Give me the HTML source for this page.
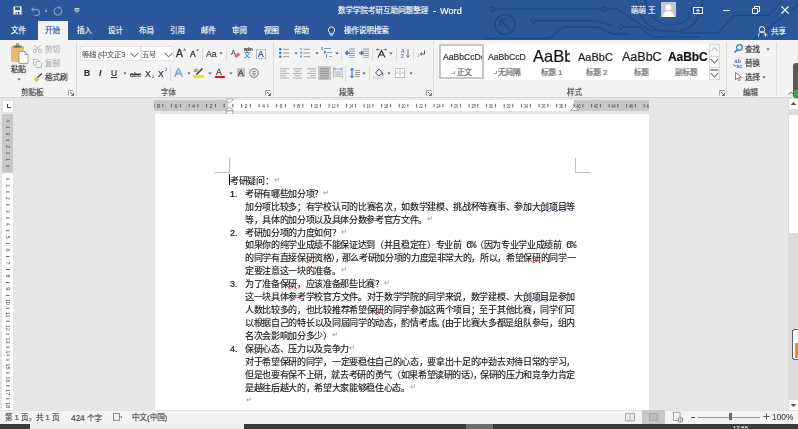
<!DOCTYPE html>
<html lang="zh-CN"><head><meta charset="utf-8"><style>
html,body{margin:0;padding:0;width:798px;height:429px;overflow:hidden;background:#fff;font-family:"Liberation Sans",sans-serif;}
.r{position:absolute;display:block;}
svg.r{will-change:transform}
.t{position:absolute;white-space:nowrap;will-change:transform;-webkit-text-stroke-width:0.2px}
.j{text-align:justify;text-align-last:justify;}
.dt{-webkit-text-stroke-width:0.12px}
.cpa{margin-right:-1.5px}
.cpb{margin-right:-1.5px}
.cp2{margin-right:-3px}
.lt{letter-spacing:-1.55px;font-family:"Liberation Mono",monospace;font-size:10px}
.sq{text-decoration:underline wavy #e0342c;text-decoration-thickness:0.6px;text-underline-offset:-1.6px;text-decoration-skip-ink:none}
.sqb{text-decoration:underline wavy #4a7bd0;text-decoration-thickness:0.6px;text-underline-offset:-1.6px;text-decoration-skip-ink:none}
.ret{color:#9a9a9a;font-size:7px;padding-left:0.5px;position:relative;top:-2px;letter-spacing:0}
</style></head><body>
<div class="r" style="left:0px;top:0px;width:798px;height:40px;background:#2b579a;"></div>
<svg class="r" style="left:460px;top:0px;" width="338" height="40" viewBox="0 0 338 40">
<g fill="none" stroke="#214a86" stroke-width="1.5" transform="translate(-460 0)">
<circle cx="492.6" cy="9" r="2.1"/><path d="M494.7 9H601"/><circle cx="603.2" cy="9" r="2.1"/><path d="M605.3 9H617L650 30.5H672Q680 33 690 33H718L734 15.5H768L783 0"/>
<circle cx="533.3" cy="20.7" r="2.1"/><path d="M535.4 20.7H596L612 26"/><circle cx="620.8" cy="26.8" r="2.1"/><path d="M622.9 27H640L652 37H700"/>
<path d="M484 38.5H550L562.7 27H598L612 34H630"/>
<circle cx="505" cy="24.4" r="10" stroke-width="1.9"/><path d="M500 19.5L510 29.5M500 19.5V26M500 19.5H506.5" stroke-width="1.8"/>
<path d="M645 0Q650 22 668 25Q690 26 693 5"/>
<path d="M636 0Q640 30 668 32Q700 33 703 0"/>
<path d="M753 40L798 5"/>
</g></svg>
<svg class="r" style="left:13px;top:6px;" width="9" height="9" viewBox="0 0 9 9"><path d="M0.5 0.5h8v8h-8z" fill="#fff"/><rect x="2" y="1.2" width="5" height="3" fill="#2b579a"/><rect x="2.5" y="6" width="4" height="2.5" fill="#2b579a"/><rect x="3.5" y="6.5" width="1.5" height="1.5" fill="#fff"/></svg>
<svg class="r" style="left:30px;top:6px;" width="11" height="10" viewBox="0 0 11 10"><path d="M2.5 3.5h4a3 3 0 0 1 0 6h-2" fill="none" stroke="#7f9ccb" stroke-width="1.2"/><path d="M0.8 3.5l3 -2.5v5z" fill="#7f9ccb"/></svg>
<div class="r" style="left:45px;top:10px;width:1.5px;height:1.5px;background:#7f9ccb;"></div>
<svg class="r" style="left:53px;top:6px;" width="10" height="10" viewBox="0 0 10 10"><path d="M7.5 2.5a3.8 3.8 0 1 1 -3 -1" fill="none" stroke="#7f9ccb" stroke-width="1.2"/><path d="M5 0l3 1.5 -2.5 2z" fill="#7f9ccb"/></svg>
<svg class="r" style="left:74px;top:8px;" width="6" height="5" viewBox="0 0 6 5"><path d="M0.5 0.6h5" stroke="#e6ecf5" stroke-width="0.9"/><path d="M0.8 2l2.2 2.5 2.2 -2.5z" fill="none" stroke="#e6ecf5" stroke-width="0.9" stroke-linejoin="round"/></svg>
<div class="t" style="left:338px;top:7.1000000000000005px;font-size:8px;line-height:8px;color:#fff;transform:scaleX(0.94);transform-origin:0 0;">数学学院考研互助问题整理</div>
<div class="r" style="left:432.5px;top:10.5px;width:3.5px;height:1px;background:#fff;"></div>
<div class="t" style="left:440px;top:6.8px;font-size:9.2px;line-height:9.2px;color:#fff;-webkit-text-stroke-width:0.15px">Word</div>
<div class="t" style="left:631px;top:7.1000000000000005px;font-size:8px;line-height:8px;color:#fff;transform:scaleX(0.94);transform-origin:0 0;">萌萌 王</div>
<div class="r" style="left:661px;top:2px;width:15px;height:15px;background:#c7c7c7;"></div>
<svg class="r" style="left:661px;top:2px;" width="15" height="15" viewBox="0 0 15 15"><circle cx="7.5" cy="5.5" r="3" fill="#fff"/><path d="M2 15 Q2 9 7.5 9 Q13 9 13 15z" fill="#fff"/></svg>
<svg class="r" style="left:693px;top:7px;" width="10" height="7" viewBox="0 0 10 7"><rect x="0.5" y="0.5" width="9" height="6" fill="none" stroke="#fff" stroke-width="1"/><path d="M5 5.5V2.5M3.3 4l1.7 -1.7 1.7 1.7" fill="none" stroke="#fff" stroke-width="1"/></svg>
<div class="r" style="left:723px;top:10px;width:7px;height:1px;background:#fff;"></div>
<svg class="r" style="left:752px;top:6px;" width="8" height="8" viewBox="0 0 8 8"><path d="M0.5 2.5h5v5h-5z M2.5 2.5v-2h5v5h-2" fill="none" stroke="#fff" stroke-width="1"/></svg>
<svg class="r" style="left:781px;top:6px;" width="8" height="8" viewBox="0 0 8 8"><path d="M0.5 0.5l7 7M7.5 0.5l-7 7" stroke="#fff" stroke-width="1.1"/></svg>
<div class="r" style="left:38px;top:21px;width:30px;height:19px;background:#f3f3f3;"></div>
<div class="t" style="left:11px;top:27.2px;font-size:8px;line-height:8px;color:#fff;transform:scaleX(0.94);transform-origin:0 0;">文件</div>
<div class="t" style="left:45px;top:27.2px;font-size:8px;line-height:8px;color:#2b579a;transform:scaleX(0.94);transform-origin:0 0;">开始</div>
<div class="t" style="left:76.5px;top:27.2px;font-size:8px;line-height:8px;color:#fff;transform:scaleX(0.94);transform-origin:0 0;">插入</div>
<div class="t" style="left:107.5px;top:27.2px;font-size:8px;line-height:8px;color:#fff;transform:scaleX(0.94);transform-origin:0 0;">设计</div>
<div class="t" style="left:139px;top:27.2px;font-size:8px;line-height:8px;color:#fff;transform:scaleX(0.94);transform-origin:0 0;">布局</div>
<div class="t" style="left:169.5px;top:27.2px;font-size:8px;line-height:8px;color:#fff;transform:scaleX(0.94);transform-origin:0 0;">引用</div>
<div class="t" style="left:201px;top:27.2px;font-size:8px;line-height:8px;color:#fff;transform:scaleX(0.94);transform-origin:0 0;">邮件</div>
<div class="t" style="left:232px;top:27.2px;font-size:8px;line-height:8px;color:#fff;transform:scaleX(0.94);transform-origin:0 0;">审阅</div>
<div class="t" style="left:263.5px;top:27.2px;font-size:8px;line-height:8px;color:#fff;transform:scaleX(0.94);transform-origin:0 0;">视图</div>
<div class="t" style="left:294px;top:27.2px;font-size:8px;line-height:8px;color:#fff;transform:scaleX(0.94);transform-origin:0 0;">帮助</div>
<svg class="r" style="left:327px;top:26px;" width="9" height="10" viewBox="0 0 9 10"><path d="M4.5 0.8a3.2 3.2 0 0 0 -1.8 5.8v1.3h3.6v-1.3a3.2 3.2 0 0 0 -1.8 -5.8z M3 9h3" fill="none" stroke="#fff" stroke-width="0.9"/></svg>
<div class="t" style="left:344px;top:27.2px;font-size:8px;line-height:8px;color:#fff;transform:scaleX(0.94);transform-origin:0 0;">操作说明搜索</div>
<svg class="r" style="left:758px;top:26px;" width="10" height="11" viewBox="0 0 10 11"><circle cx="4" cy="3.5" r="2.8" fill="none" stroke="#fff" stroke-width="1"/><path d="M0.5 10.5q0 -4.5 3.5 -4.5q2 0 3 1.2M7.5 7v3.5M5.8 8.8h3.5" fill="none" stroke="#fff" stroke-width="1"/></svg>
<div class="t" style="left:770.5px;top:28.2px;font-size:8px;line-height:8px;color:#fff;transform:scaleX(0.94);transform-origin:0 0;">共享</div>
<div class="r" style="left:0px;top:40px;width:798px;height:58px;background:#f3f3f3;"></div>
<div class="r" style="left:0px;top:97px;width:798px;height:1px;background:#d6d6d6;"></div>
<svg class="r" style="left:10px;top:43px;" width="19" height="21" viewBox="0 0 19 21"><rect x="1" y="3" width="13" height="16" rx="1" fill="#e8bd6a"/>
<rect x="3.5" y="2.5" width="8" height="2.2" fill="#6f6f6f"/><rect x="6.3" y="0.8" width="2.4" height="2" fill="none" stroke="#6f6f6f" stroke-width="0.8"/>
<path d="M9 8.5h6l3 3v9h-9z" fill="#fff" stroke="#8c8c8c" stroke-width="0.8"/><path d="M15 8.5v3h3" fill="none" stroke="#8c8c8c" stroke-width="0.8"/></svg>
<div class="t" style="left:10.5px;top:66.2px;font-size:8px;line-height:8px;color:#333;transform:scaleX(0.94);transform-origin:0 0;">粘贴</div>
<svg class="r" style="left:16.5px;top:78px;" width="4" height="3" viewBox="0 0 4 3"><path d="M0.3 0.5h3.4L2 2.5z" fill="#555"/></svg>
<svg class="r" style="left:33px;top:45px;" width="9" height="8" viewBox="0 0 9 8"><circle cx="2" cy="6" r="1.6" fill="none" stroke="#b3b3b3" stroke-width="0.9"/><circle cx="7" cy="6" r="1.6" fill="none" stroke="#b3b3b3" stroke-width="0.9"/><path d="M1 0l5.5 5M8 0l-5.5 5" stroke="#b3b3b3" stroke-width="0.9"/></svg>
<div class="t" style="left:44.5px;top:46.2px;font-size:8px;line-height:8px;color:#b0b0b0;transform:scaleX(0.94);transform-origin:0 0;">剪切</div>
<svg class="r" style="left:33px;top:59px;" width="9" height="9" viewBox="0 0 9 9"><path d="M0.5 0.5h4l1.5 1.5v4h-5.5z" fill="#f3f3f3" stroke="#b3b3b3" stroke-width="0.8"/><path d="M3 2.5h4l1.5 1.5v4.5h-5.5z" fill="#f3f3f3" stroke="#b3b3b3" stroke-width="0.8"/></svg>
<div class="t" style="left:44.5px;top:60.2px;font-size:8px;line-height:8px;color:#b0b0b0;transform:scaleX(0.94);transform-origin:0 0;">复制</div>
<svg class="r" style="left:33px;top:73px;" width="10" height="9" viewBox="0 0 10 9"><path d="M0.5 6.5l3 -3 3 3 -3 2.5z" fill="#e8bd6a"/><path d="M4.5 4.5l4.5 -4" stroke="#444" stroke-width="1.4"/></svg>
<div class="t" style="left:44.5px;top:74.2px;font-size:8px;line-height:8px;color:#333;transform:scaleX(0.94);transform-origin:0 0;">格式刷</div>
<div class="t" style="left:21px;top:88.7px;font-size:8px;line-height:8px;color:#444;transform:scaleX(0.94);transform-origin:0 0;">剪贴板</div>
<svg class="r" style="left:68px;top:90px;" width="6" height="6" viewBox="0 0 6 6"><path d="M0.5 5.5V0.5H5.5" fill="none" stroke="#8a8a8a" stroke-width="0.8"/><path d="M2 2l3.5 3.5M5.5 3v2.5H3" fill="none" stroke="#555" stroke-width="0.8"/></svg>
<div class="r" style="left:75.5px;top:42px;width:1px;height:54px;background:#dcdcdc;"></div>
<div class="r" style="left:80px;top:46px;width:61px;height:15px;background:#fff;box-sizing:border-box;border:1px solid #e3e3e3"></div>
<div class="t" style="left:81.5px;top:50.5px;font-size:7.3px;line-height:7.3px;color:#666;">等线 (中文正3</div>
<svg class="r" style="left:129.5px;top:51.5px;" width="9" height="6" viewBox="0 0 9 6"><path d="M0.5 0.8l4 4 4 -4" fill="none" stroke="#444" stroke-width="1"/></svg>
<div class="r" style="left:140.5px;top:46px;width:33px;height:15px;background:#fff;box-sizing:border-box;border:1px solid #e3e3e3"></div>
<div class="t" style="left:142px;top:50.5px;font-size:7.3px;line-height:7.3px;color:#666;">五号</div>
<svg class="r" style="left:163.5px;top:51.5px;" width="9" height="6" viewBox="0 0 9 6"><path d="M0.5 0.8l4 4 4 -4" fill="none" stroke="#444" stroke-width="1"/></svg>
<div class="t" style="left:176px;top:49.2px;font-size:10.3px;line-height:10.3px;color:#333;-webkit-text-stroke-width:0.35px">A</div>
<svg class="r" style="left:182.5px;top:48px;" width="3" height="2.5" viewBox="0 0 3 2.5"><path d="M0 2.5L1.5 0.3 3 2.5z" fill="#3a78c3"/></svg>
<div class="t" style="left:189.8px;top:50.3px;font-size:8.6px;line-height:8.6px;color:#333;-webkit-text-stroke-width:0.35px">A</div>
<svg class="r" style="left:196px;top:48.5px;" width="3" height="2.5" viewBox="0 0 3 2.5"><path d="M0 0.3L1.5 2.5 3 0.3z" fill="#3a78c3"/></svg>
<div class="r" style="left:201.5px;top:47px;width:1px;height:14px;background:#dcdcdc;"></div>
<div class="t" style="left:205.5px;top:49.5px;font-size:8.8px;line-height:8.8px;color:#444;">Aa</div>
<svg class="r" style="left:218.5px;top:52px;" width="4" height="3" viewBox="0 0 4 3"><path d="M0.3 0.5h3.4L2 2.5z" fill="#555"/></svg>
<div class="r" style="left:225.5px;top:47px;width:1px;height:14px;background:#dcdcdc;"></div>
<div class="t" style="left:231px;top:48.5px;font-size:7px;line-height:7px;color:#555;">A</div>
<svg class="r" style="left:233px;top:52px;" width="8" height="6" viewBox="0 0 8 6"><path d="M1 4l4 -3.5 2.5 2 -4 3.5z" fill="#e06b8c"/></svg>
<div class="t" style="left:243.5px;top:48px;font-size:4.5px;line-height:4.5px;color:#444;font-weight:bold">wén</div>
<div class="t" style="left:244px;top:52px;font-size:6.5px;line-height:6.5px;color:#3a78c3;">文</div>
<div class="r" style="left:256px;top:48.5px;width:10px;height:10px;background:transparent;box-sizing:border-box;border:1px solid #a9c1de;background:#fbfbfb"></div>
<div class="t" style="left:257.8px;top:50px;font-size:8.5px;line-height:8.5px;color:#333;">A</div>
<div class="t" style="left:83.5px;top:69px;font-size:8.5px;line-height:8.5px;color:#333;font-weight:bold">B</div>
<div class="t" style="left:98.5px;top:69px;font-size:8.5px;line-height:8.5px;color:#333;font-style:italic;font-weight:bold">I</div>
<div class="t" style="left:110.5px;top:68.5px;font-size:8.5px;line-height:8.5px;color:#333;">U</div>
<div class="r" style="left:110.5px;top:77px;width:6.5px;height:0.8px;background:#333;"></div>
<svg class="r" style="left:122.5px;top:72px;" width="4" height="3" viewBox="0 0 4 3"><path d="M0.3 0.5h3.4L2 2.5z" fill="#555"/></svg>
<div class="t" style="left:129.5px;top:70.5px;font-size:7px;line-height:7px;color:#444;font-family:"Liberation Serif",serif;letter-spacing:-0.3px">abe</div>
<div class="r" style="left:130px;top:73.5px;width:9.5px;height:0.7px;background:#444;"></div>
<div class="t" style="left:145px;top:69.5px;font-size:8.6px;line-height:8.6px;color:#333;">X</div>
<div class="t" style="left:151.5px;top:75px;font-size:4px;line-height:4px;color:#3a78c3;">2</div>
<div class="t" style="left:158.3px;top:69.5px;font-size:8.6px;line-height:8.6px;color:#333;">X</div>
<div class="t" style="left:164.8px;top:68.3px;font-size:4px;line-height:4px;color:#3a78c3;">2</div>
<div class="r" style="left:169.5px;top:66px;width:1px;height:15px;background:#dcdcdc;"></div>
<svg class="r" style="left:174px;top:68px;" width="9" height="9" viewBox="0 0 9 9"><path d="M0.8 8.5L4.5 0.5 8.2 8.5M2.5 5.6h4" fill="none" stroke="#4a86cf" stroke-width="1.6"/><path d="M0.8 8.5L4.5 0.5 8.2 8.5M2.5 5.6h4" fill="none" stroke="#e4eefa" stroke-width="0.5"/></svg>
<svg class="r" style="left:186.5px;top:72px;" width="4" height="3" viewBox="0 0 4 3"><path d="M0.3 0.5h3.4L2 2.5z" fill="#555"/></svg>
<svg class="r" style="left:193px;top:67px;" width="11" height="9" viewBox="0 0 11 9"><text x="0.5" y="4.5" font-size="4.5" font-family="Liberation Sans" fill="#555">ab</text><path d="M3.5 7.5L9.5 1.5" stroke="#444" stroke-width="1.6"/><path d="M2.5 8.3l1.2 -1.2" stroke="#444" stroke-width="0.8"/></svg>
<div class="r" style="left:193px;top:75px;width:10.5px;height:3px;background:#f5eb00;"></div>
<svg class="r" style="left:207.5px;top:72px;" width="4" height="3" viewBox="0 0 4 3"><path d="M0.3 0.5h3.4L2 2.5z" fill="#555"/></svg>
<div class="t" style="left:216px;top:68px;font-size:8.5px;line-height:8.5px;color:#333;">A</div>
<div class="r" style="left:215px;top:75.5px;width:10px;height:2.5px;background:#e81123;"></div>
<svg class="r" style="left:229px;top:72px;" width="4" height="3" viewBox="0 0 4 3"><path d="M0.3 0.5h3.4L2 2.5z" fill="#555"/></svg>
<div class="r" style="left:236.5px;top:68px;width:8.5px;height:9px;background:#c4c4c4;"></div>
<div class="t" style="left:237.5px;top:68.5px;font-size:8.5px;line-height:8.5px;color:#333;">A</div>
<svg class="r" style="left:249px;top:68px;" width="10" height="10" viewBox="0 0 10 10"><circle cx="5" cy="5" r="4.3" fill="none" stroke="#666" stroke-width="0.9"/><path d="M3 3.5h4M5 2.5v5M3 5.5h4M3.5 7h3" stroke="#777" stroke-width="0.6"/></svg>
<div class="t" style="left:161px;top:88.7px;font-size:8px;line-height:8px;color:#444;transform:scaleX(0.94);transform-origin:0 0;">字体</div>
<svg class="r" style="left:265px;top:90px;" width="6" height="6" viewBox="0 0 6 6"><path d="M0.5 5.5V0.5H5.5" fill="none" stroke="#8a8a8a" stroke-width="0.8"/><path d="M2 2l3.5 3.5M5.5 3v2.5H3" fill="none" stroke="#555" stroke-width="0.8"/></svg>
<div class="r" style="left:272.5px;top:42px;width:1px;height:54px;background:#dcdcdc;"></div>
<svg class="r" style="left:279px;top:48px;" width="11" height="10" viewBox="0 0 11 10"><circle cx="1.3" cy="1.3" r="1.3" fill="#3a78c3"/><circle cx="1.3" cy="5" r="1.3" fill="#3a78c3"/><circle cx="1.3" cy="8.7" r="1.3" fill="#3a78c3"/><rect x="4" y="0.8" width="6" height="1" fill="#9a9a9a"/><rect x="4" y="4.5" width="6" height="1" fill="#9a9a9a"/><rect x="4" y="8.200000000000001" width="6" height="1" fill="#9a9a9a"/></svg>
<svg class="r" style="left:293.5px;top:52px;" width="4" height="3" viewBox="0 0 4 3"><path d="M0.3 0.5h3.4L2 2.5z" fill="#555"/></svg>
<svg class="r" style="left:300px;top:48px;" width="11" height="10" viewBox="0 0 11 10"><rect x="0.5" y="0" width="1" height="2.2" fill="#4a86cf"/><rect x="0.3" y="3.7" width="1.4" height="2.2" fill="#4a86cf"/><rect x="0.3" y="7.4" width="1.4" height="2.2" fill="#4a86cf"/><rect x="3.5" y="0.8" width="6.5" height="1" fill="#9a9a9a"/><rect x="3.5" y="4.5" width="6.5" height="1" fill="#9a9a9a"/><rect x="3.5" y="8.200000000000001" width="6.5" height="1" fill="#9a9a9a"/></svg>
<svg class="r" style="left:314.5px;top:52px;" width="4" height="3" viewBox="0 0 4 3"><path d="M0.3 0.5h3.4L2 2.5z" fill="#555"/></svg>
<svg class="r" style="left:321px;top:47px;" width="12" height="11" viewBox="0 0 12 11"><rect x="0.5" y="0" width="1" height="3" fill="#3a78c3"/><rect x="3" y="3.5" width="1.5" height="3" fill="#3a78c3"/><rect x="5" y="7.5" width="1" height="3" fill="#3a78c3"/><rect x="3" y="1.0" width="7" height="1" fill="#9a9a9a"/><rect x="6" y="5" width="5" height="1" fill="#9a9a9a"/><rect x="8" y="9" width="3" height="1" fill="#9a9a9a"/></svg>
<svg class="r" style="left:334.5px;top:52px;" width="4" height="3" viewBox="0 0 4 3"><path d="M0.3 0.5h3.4L2 2.5z" fill="#555"/></svg>
<div class="r" style="left:341px;top:47px;width:1px;height:14px;background:#dcdcdc;"></div>
<svg class="r" style="left:345px;top:48px;" width="10" height="10" viewBox="0 0 10 10"><rect x="4" y="0.5" width="6" height="1" fill="#9a9a9a"/><rect x="4" y="2.7" width="6" height="1" fill="#9a9a9a"/><rect x="4" y="4.9" width="6" height="1" fill="#9a9a9a"/><rect x="4" y="7.1000000000000005" width="6" height="1" fill="#9a9a9a"/><rect x="4" y="9.3" width="6" height="1" fill="#9a9a9a"/><path d="M0.5 5h4M2.5 3l-2 2 2 2" fill="none" stroke="#3a78c3" stroke-width="1.3"/></svg>
<svg class="r" style="left:358.5px;top:48px;" width="10" height="10" viewBox="0 0 10 10"><rect x="4" y="0.5" width="6" height="1" fill="#9a9a9a"/><rect x="4" y="2.7" width="6" height="1" fill="#9a9a9a"/><rect x="4" y="4.9" width="6" height="1" fill="#9a9a9a"/><rect x="4" y="7.1000000000000005" width="6" height="1" fill="#9a9a9a"/><rect x="4" y="9.3" width="6" height="1" fill="#9a9a9a"/><path d="M0 5h4M2 3l2 2 -2 2" fill="none" stroke="#3a78c3" stroke-width="1.3"/></svg>
<div class="r" style="left:372px;top:47px;width:1px;height:14px;background:#dcdcdc;"></div>
<svg class="r" style="left:375.5px;top:47.5px;" width="11" height="10" viewBox="0 0 11 10"><path d="M2 9.5L5.5 2.5 9 9.5M3.2 7h4.6" fill="none" stroke="#333" stroke-width="1.2"/><path d="M0.5 1.5h3M1.5 0.5l-1 1 1 1M10.5 1.5h-3M9.5 0.5l1 1 -1 1" fill="none" stroke="#3a78c3" stroke-width="0.9"/></svg>
<svg class="r" style="left:388.5px;top:52px;" width="4" height="3" viewBox="0 0 4 3"><path d="M0.3 0.5h3.4L2 2.5z" fill="#555"/></svg>
<div class="r" style="left:396px;top:47px;width:1px;height:14px;background:#dcdcdc;"></div>
<svg class="r" style="left:400.5px;top:47.5px;" width="9" height="11" viewBox="0 0 9 11"><text x="0" y="4.5" font-size="5" font-family="Liberation Sans" fill="#3a78c3" font-weight="bold">A</text><text x="0" y="10" font-size="5" font-family="Liberation Sans" fill="#9b4fc9" font-weight="bold">Z</text><path d="M7 1v8M5.5 7.5l1.5 2 1.5 -2" fill="none" stroke="#555" stroke-width="0.8"/></svg>
<div class="r" style="left:413px;top:47px;width:1px;height:14px;background:#dcdcdc;"></div>
<svg class="r" style="left:417px;top:49.5px;" width="9" height="8" viewBox="0 0 9 8"><path d="M7.5 0.5v3.5h-4M4.8 2.5l-1.6 1.5 1.6 1.5" fill="none" stroke="#555" stroke-width="1"/><path d="M0.5 7l2 -2" stroke="#777" stroke-width="0.8"/></svg>
<svg class="r" style="left:279.5px;top:67.5px;" width="9" height="11" viewBox="0 0 9 11"><rect x="0" y="0.30" width="9" height="1" fill="#b0b0b0"/><rect x="0" y="2.60" width="6" height="1" fill="#b0b0b0"/><rect x="0" y="4.90" width="9" height="1" fill="#b0b0b0"/><rect x="0" y="7.20" width="6" height="1" fill="#b0b0b0"/><rect x="0" y="9.50" width="9" height="1" fill="#b0b0b0"/></svg>
<svg class="r" style="left:293px;top:67.5px;" width="9" height="11" viewBox="0 0 9 11"><rect x="0" y="0.30" width="9" height="1" fill="#b0b0b0"/><rect x="1.5" y="2.60" width="6" height="1" fill="#b0b0b0"/><rect x="0" y="4.90" width="9" height="1" fill="#b0b0b0"/><rect x="1.5" y="7.20" width="6" height="1" fill="#b0b0b0"/><rect x="0" y="9.50" width="9" height="1" fill="#b0b0b0"/></svg>
<svg class="r" style="left:306.5px;top:67.5px;" width="9" height="11" viewBox="0 0 9 11"><rect x="0" y="0.30" width="9" height="1" fill="#b0b0b0"/><rect x="3" y="2.60" width="6" height="1" fill="#b0b0b0"/><rect x="0" y="4.90" width="9" height="1" fill="#b0b0b0"/><rect x="3" y="7.20" width="6" height="1" fill="#b0b0b0"/><rect x="0" y="9.50" width="9" height="1" fill="#b0b0b0"/></svg>
<div class="r" style="left:317.5px;top:66px;width:13.5px;height:14px;background:#c6c6c6;"></div>
<svg class="r" style="left:320px;top:67.5px;" width="9" height="11" viewBox="0 0 9 11"><rect x="0" y="0.30" width="9" height="1" fill="#8a8a8a"/><rect x="0" y="2.60" width="9" height="1" fill="#8a8a8a"/><rect x="0" y="4.90" width="9" height="1" fill="#8a8a8a"/><rect x="0" y="7.20" width="9" height="1" fill="#8a8a8a"/><rect x="0" y="9.50" width="9" height="1" fill="#8a8a8a"/></svg>
<svg class="r" style="left:333px;top:67px;" width="9.5" height="11" viewBox="0 0 9.5 11"><path d="M1 2h7.5M2.5 0.8l-1.5 1.2 1.5 1.2M7 0.8l1.5 1.2 -1.5 1.2" fill="none" stroke="#5a93d6" stroke-width="0.7"/><rect x="1.5" y="4.5" width="6.5" height="1" fill="#b0b0b0"/><rect x="1.5" y="6.6" width="6.5" height="1" fill="#b0b0b0"/><rect x="1.5" y="8.7" width="6.5" height="1" fill="#b0b0b0"/><rect x="0" y="0" width="0.8" height="11" fill="#7aa7de"/><rect x="8.7" y="0" width="0.8" height="11" fill="#7aa7de"/></svg>
<div class="r" style="left:344.5px;top:66px;width:1px;height:15px;background:#dcdcdc;"></div>
<svg class="r" style="left:349.5px;top:67.5px;" width="10" height="10" viewBox="0 0 10 10"><path d="M2 0.5v9M0.3 2.2l1.7 -1.7 1.7 1.7M0.3 7.8l1.7 1.7 1.7 -1.7" fill="none" stroke="#3a78c3" stroke-width="1.1"/><rect x="5" y="2" width="5" height="1" fill="#9a9a9a"/><rect x="5" y="4" width="5" height="1" fill="#9a9a9a"/><rect x="5" y="6" width="5" height="1" fill="#9a9a9a"/><rect x="5" y="8" width="5" height="1" fill="#9a9a9a"/></svg>
<svg class="r" style="left:362px;top:72px;" width="4" height="3" viewBox="0 0 4 3"><path d="M0.3 0.5h3.4L2 2.5z" fill="#555"/></svg>
<div class="r" style="left:369px;top:66px;width:1px;height:15px;background:#dcdcdc;"></div>
<svg class="r" style="left:372.5px;top:67.5px;" width="11" height="11" viewBox="0 0 11 11"><path d="M2.5 5l3.5 -4 3.5 4 -3.5 3z" fill="none" stroke="#555" stroke-width="1"/><path d="M9 4.5q1.5 2 0.5 3" stroke="#3a78c3" stroke-width="1.2" fill="none"/><rect x="0.5" y="9" width="10" height="1.5" fill="#fff" stroke="#aaa" stroke-width="0.5"/></svg>
<svg class="r" style="left:387px;top:72px;" width="4" height="3" viewBox="0 0 4 3"><path d="M0.3 0.5h3.4L2 2.5z" fill="#555"/></svg>
<svg class="r" style="left:394.5px;top:67.5px;" width="10" height="10" viewBox="0 0 10 10"><rect x="0.5" y="0.5" width="9" height="9" fill="#fff" stroke="#c4c4c4" stroke-width="1"/><path d="M5 0.5v9M0.5 5h9" stroke="#c4c4c4" stroke-width="1"/></svg>
<svg class="r" style="left:408.5px;top:72px;" width="4" height="3" viewBox="0 0 4 3"><path d="M0.3 0.5h3.4L2 2.5z" fill="#555"/></svg>
<div class="t" style="left:339px;top:88.7px;font-size:8px;line-height:8px;color:#444;transform:scaleX(0.94);transform-origin:0 0;">段落</div>
<svg class="r" style="left:425.5px;top:90px;" width="6" height="6" viewBox="0 0 6 6"><path d="M0.5 5.5V0.5H5.5" fill="none" stroke="#8a8a8a" stroke-width="0.8"/><path d="M2 2l3.5 3.5M5.5 3v2.5H3" fill="none" stroke="#555" stroke-width="0.8"/></svg>
<div class="r" style="left:432.5px;top:42px;width:1px;height:54px;background:#dcdcdc;"></div>
<div class="r" style="left:439px;top:44px;width:270px;height:36px;background:#fff;"></div>
<div class="r" style="left:439px;top:44px;width:45px;height:35px;background:transparent;box-sizing:border-box;border:2px solid #c6c6c6"></div>
<div class="r" style="left:441px;top:50px;width:41px;height:13px;overflow:hidden"><div class="t" style="left:1.5px;top:2.5px;font-size:8.6px;line-height:8.6px;color:#333">AaBbCcDc</div></div>
<svg class="r" style="left:450.5px;top:71px;" width="4" height="3" viewBox="0 0 4 3"><path d="M3.5 0v2.5H0.5" fill="none" stroke="#777" stroke-width="0.7"/></svg>
<div class="t" style="left:457px;top:68.7px;font-size:8px;line-height:8px;color:#555;transform:scaleX(0.94);transform-origin:0 0;">正文</div>
<div class="r" style="left:486px;top:50px;width:40px;height:13px;overflow:hidden"><div class="t" style="left:1.5px;top:2.5px;font-size:8.6px;line-height:8.6px;color:#333">AaBbCcDc</div></div>
<svg class="r" style="left:492.5px;top:71px;" width="4" height="3" viewBox="0 0 4 3"><path d="M3.5 0v2.5H0.5" fill="none" stroke="#777" stroke-width="0.7"/></svg>
<div class="t" style="left:498px;top:68.7px;font-size:8px;line-height:8px;color:#555;transform:scaleX(0.94);transform-origin:0 0;">无间隔</div>
<div class="r" style="left:532px;top:44px;width:38px;height:20px;overflow:hidden"><div class="t" style="left:0.5px;top:4px;font-size:16.5px;line-height:16.5px;color:#111">AaBbC</div></div>
<div class="t" style="left:540.5px;top:68.7px;font-size:8px;line-height:8px;color:#666;transform:scaleX(0.94);transform-origin:0 0;">标题 1</div>
<div class="t" style="left:577.5px;top:51.5px;font-size:11px;line-height:11px;color:#222;">AaBbC</div>
<div class="t" style="left:586px;top:68.7px;font-size:8px;line-height:8px;color:#666;transform:scaleX(0.94);transform-origin:0 0;">标题 2</div>
<div class="t" style="left:622px;top:51px;font-size:12.5px;line-height:12.5px;color:#222;">AaBbC</div>
<div class="t" style="left:633.5px;top:68.7px;font-size:8px;line-height:8px;color:#666;transform:scaleX(0.94);transform-origin:0 0;">标题</div>
<div class="t" style="left:667.5px;top:51.3px;font-size:12px;line-height:12px;color:#111;font-weight:bold;letter-spacing:-0.1px">AaBbC</div>
<div class="t" style="left:674.5px;top:68.7px;font-size:8px;line-height:8px;color:#666;transform:scaleX(0.94);transform-origin:0 0;">副标题</div>
<div class="r" style="left:709px;top:44px;width:11px;height:36px;background:#f7f7f7;box-sizing:border-box;border:1px solid #dadada"></div>
<div class="r" style="left:709px;top:55.5px;width:11px;height:1px;background:#dadada;"></div>
<div class="r" style="left:709px;top:67px;width:11px;height:1px;background:#dadada;"></div>
<svg class="r" style="left:710px;top:46px;" width="9" height="7" viewBox="0 0 9 7"><path d="M0.8 5.5l3.7 -4 3.7 4" fill="none" stroke="#aaa" stroke-width="0.9"/></svg>
<svg class="r" style="left:710px;top:58px;" width="9" height="7" viewBox="0 0 9 7"><path d="M0.8 1l3.7 4.2 3.7 -4.2" fill="none" stroke="#444" stroke-width="1"/></svg>
<svg class="r" style="left:710px;top:69px;" width="9" height="10" viewBox="0 0 9 10"><path d="M0.5 1h8M0.8 4l3.7 4.2 3.7 -4.2" fill="none" stroke="#444" stroke-width="1"/></svg>
<div class="t" style="left:567px;top:88.7px;font-size:8px;line-height:8px;color:#444;transform:scaleX(0.94);transform-origin:0 0;">样式</div>
<svg class="r" style="left:718.5px;top:90px;" width="6" height="6" viewBox="0 0 6 6"><path d="M0.5 5.5V0.5H5.5" fill="none" stroke="#8a8a8a" stroke-width="0.8"/><path d="M2 2l3.5 3.5M5.5 3v2.5H3" fill="none" stroke="#555" stroke-width="0.8"/></svg>
<div class="r" style="left:725.5px;top:42px;width:1px;height:54px;background:#dcdcdc;"></div>
<svg class="r" style="left:733.5px;top:44px;" width="9" height="9" viewBox="0 0 9 9"><circle cx="5.5" cy="3.5" r="2.8" fill="none" stroke="#2f6fba" stroke-width="1.2"/><path d="M3.5 5.5l-3 3" stroke="#2f6fba" stroke-width="1.5"/></svg>
<div class="t" style="left:744.5px;top:45.7px;font-size:8px;line-height:8px;color:#333;transform:scaleX(0.94);transform-origin:0 0;">查找</div>
<svg class="r" style="left:765.5px;top:48px;" width="4" height="3" viewBox="0 0 4 3"><path d="M0.3 0.5h3.4L2 2.5z" fill="#555"/></svg>
<svg class="r" style="left:733px;top:57.5px;" width="10" height="10" viewBox="0 0 10 10"><text x="1.2" y="4.6" font-size="5.6" font-family="Liberation Sans" font-weight="bold" fill="#3a78c3">a</text><text x="4.6" y="4.6" font-size="5.6" font-family="Liberation Sans" font-weight="bold" fill="#8e4fc0">b</text><text x="3.6" y="9.8" font-size="5.2" font-family="Liberation Sans" font-weight="bold" fill="#3a78c3">ac</text><path d="M0.5 6.2l1.6 2.2 1.4 -1.6" fill="none" stroke="#3a78c3" stroke-width="0.9"/></svg>
<div class="t" style="left:744.5px;top:59.7px;font-size:8px;line-height:8px;color:#333;transform:scaleX(0.94);transform-origin:0 0;">替换</div>
<svg class="r" style="left:734.5px;top:72px;" width="7" height="9" viewBox="0 0 7 9"><path d="M0.5 0.5v7.5l2 -2 1.5 3 1.2 -0.6 -1.5 -3h3z" fill="#fff" stroke="#666" stroke-width="0.8"/></svg>
<div class="t" style="left:744.5px;top:73.7px;font-size:8px;line-height:8px;color:#333;transform:scaleX(0.94);transform-origin:0 0;">选择</div>
<svg class="r" style="left:762px;top:76px;" width="4" height="3" viewBox="0 0 4 3"><path d="M0.3 0.5h3.4L2 2.5z" fill="#555"/></svg>
<div class="t" style="left:743px;top:88.7px;font-size:8px;line-height:8px;color:#444;transform:scaleX(0.94);transform-origin:0 0;">编辑</div>
<div class="r" style="left:776px;top:42px;width:1px;height:54px;background:#dcdcdc;"></div>
<svg class="r" style="left:788px;top:91px;" width="6" height="4" viewBox="0 0 6 4"><path d="M0.5 3.5l2.5 -2.5 2.5 2.5" fill="none" stroke="#555" stroke-width="0.8"/></svg>
<div class="r" style="left:793px;top:63px;width:6px;height:35px;background:#5a5a5a;border-radius:3px 0 0 3px"></div>
<div class="r" style="left:794px;top:90px;width:4px;height:7px;background:#3aa655;"></div>
<div class="r" style="left:0px;top:98px;width:798px;height:312px;background:#e6e6e6;"></div>
<div class="r" style="left:2px;top:100px;width:12px;height:13px;background:#fff;box-sizing:border-box;border:1px solid #e0e0e0"></div>
<svg class="r" style="left:6px;top:103px;" width="6" height="6" viewBox="0 0 6 6"><path d="M1.5 1v3.5h3.5" fill="none" stroke="#444" stroke-width="1.1"/></svg>
<div class="r" style="left:154px;top:100px;width:495px;height:11px;background:#c8c8c8;"></div>
<div class="r" style="left:228px;top:100px;width:346px;height:11px;background:#fff;"></div>
<svg class="r" style="left:154px;top:100px;" width="495" height="11" viewBox="0 0 495 11"><text x="4.50" y="8.2" font-size="5.4" text-anchor="middle" font-family="Liberation Sans" fill="#3a3a3a">8</text><text x="22.00" y="8.2" font-size="5.4" text-anchor="middle" font-family="Liberation Sans" fill="#3a3a3a">6</text><text x="39.50" y="8.2" font-size="5.4" text-anchor="middle" font-family="Liberation Sans" fill="#3a3a3a">4</text><text x="57.00" y="8.2" font-size="5.4" text-anchor="middle" font-family="Liberation Sans" fill="#3a3a3a">2</text><text x="92.00" y="8.2" font-size="5.4" text-anchor="middle" font-family="Liberation Sans" fill="#3a3a3a">2</text><text x="109.50" y="8.2" font-size="5.4" text-anchor="middle" font-family="Liberation Sans" fill="#3a3a3a">4</text><text x="127.00" y="8.2" font-size="5.4" text-anchor="middle" font-family="Liberation Sans" fill="#3a3a3a">6</text><text x="144.50" y="8.2" font-size="5.4" text-anchor="middle" font-family="Liberation Sans" fill="#3a3a3a">8</text><text x="159.90" y="8.2" font-size="5.4" text-anchor="start" textLength="4.2" lengthAdjust="spacingAndGlyphs" font-family="Liberation Sans" fill="#3a3a3a">10</text><text x="177.40" y="8.2" font-size="5.4" text-anchor="start" textLength="4.2" lengthAdjust="spacingAndGlyphs" font-family="Liberation Sans" fill="#3a3a3a">12</text><text x="194.90" y="8.2" font-size="5.4" text-anchor="start" textLength="4.2" lengthAdjust="spacingAndGlyphs" font-family="Liberation Sans" fill="#3a3a3a">14</text><text x="212.40" y="8.2" font-size="5.4" text-anchor="start" textLength="4.2" lengthAdjust="spacingAndGlyphs" font-family="Liberation Sans" fill="#3a3a3a">16</text><text x="229.90" y="8.2" font-size="5.4" text-anchor="start" textLength="4.2" lengthAdjust="spacingAndGlyphs" font-family="Liberation Sans" fill="#3a3a3a">18</text><text x="247.40" y="8.2" font-size="5.4" text-anchor="start" textLength="4.2" lengthAdjust="spacingAndGlyphs" font-family="Liberation Sans" fill="#3a3a3a">20</text><text x="264.90" y="8.2" font-size="5.4" text-anchor="start" textLength="4.2" lengthAdjust="spacingAndGlyphs" font-family="Liberation Sans" fill="#3a3a3a">22</text><text x="282.40" y="8.2" font-size="5.4" text-anchor="start" textLength="4.2" lengthAdjust="spacingAndGlyphs" font-family="Liberation Sans" fill="#3a3a3a">24</text><text x="299.90" y="8.2" font-size="5.4" text-anchor="start" textLength="4.2" lengthAdjust="spacingAndGlyphs" font-family="Liberation Sans" fill="#3a3a3a">26</text><text x="317.40" y="8.2" font-size="5.4" text-anchor="start" textLength="4.2" lengthAdjust="spacingAndGlyphs" font-family="Liberation Sans" fill="#3a3a3a">28</text><text x="334.90" y="8.2" font-size="5.4" text-anchor="start" textLength="4.2" lengthAdjust="spacingAndGlyphs" font-family="Liberation Sans" fill="#3a3a3a">30</text><text x="352.40" y="8.2" font-size="5.4" text-anchor="start" textLength="4.2" lengthAdjust="spacingAndGlyphs" font-family="Liberation Sans" fill="#3a3a3a">32</text><text x="369.90" y="8.2" font-size="5.4" text-anchor="start" textLength="4.2" lengthAdjust="spacingAndGlyphs" font-family="Liberation Sans" fill="#3a3a3a">34</text><text x="387.40" y="8.2" font-size="5.4" text-anchor="start" textLength="4.2" lengthAdjust="spacingAndGlyphs" font-family="Liberation Sans" fill="#3a3a3a">36</text><text x="404.90" y="8.2" font-size="5.4" text-anchor="start" textLength="4.2" lengthAdjust="spacingAndGlyphs" font-family="Liberation Sans" fill="#3a3a3a">38</text><text x="422.40" y="8.2" font-size="5.4" text-anchor="start" textLength="4.2" lengthAdjust="spacingAndGlyphs" font-family="Liberation Sans" fill="#3a3a3a">40</text><text x="439.90" y="8.2" font-size="5.4" text-anchor="start" textLength="4.2" lengthAdjust="spacingAndGlyphs" font-family="Liberation Sans" fill="#3a3a3a">42</text><text x="457.40" y="8.2" font-size="5.4" text-anchor="start" textLength="4.2" lengthAdjust="spacingAndGlyphs" font-family="Liberation Sans" fill="#3a3a3a">44</text><text x="474.90" y="8.2" font-size="5.4" text-anchor="start" textLength="4.2" lengthAdjust="spacingAndGlyphs" font-family="Liberation Sans" fill="#3a3a3a">46</text><text x="492.40" y="8.2" font-size="5.4" text-anchor="start" textLength="4.2" lengthAdjust="spacingAndGlyphs" font-family="Liberation Sans" fill="#3a3a3a">48</text><rect x="-0.33" y="3.8" width="0.9" height="3.6" fill="#555"/><rect x="8.43" y="3.8" width="0.9" height="3.6" fill="#555"/><rect x="17.18" y="3.8" width="0.9" height="3.6" fill="#555"/><rect x="25.93" y="3.8" width="0.9" height="3.6" fill="#555"/><rect x="34.67" y="3.8" width="0.9" height="3.6" fill="#555"/><rect x="43.42" y="3.8" width="0.9" height="3.6" fill="#555"/><rect x="52.17" y="3.8" width="0.9" height="3.6" fill="#555"/><rect x="60.92" y="3.8" width="0.9" height="3.6" fill="#555"/><rect x="69.67" y="3.8" width="0.9" height="3.6" fill="#555"/><rect x="78.42" y="3.8" width="0.9" height="3.6" fill="#555"/><rect x="87.17" y="3.8" width="0.9" height="3.6" fill="#555"/><rect x="95.92" y="3.8" width="0.9" height="3.6" fill="#555"/><rect x="104.67" y="3.8" width="0.9" height="3.6" fill="#555"/><rect x="113.42" y="3.8" width="0.9" height="3.6" fill="#555"/><rect x="122.17" y="3.8" width="0.9" height="3.6" fill="#555"/><rect x="130.93" y="3.8" width="0.9" height="3.6" fill="#555"/><rect x="139.68" y="3.8" width="0.9" height="3.6" fill="#555"/><rect x="148.43" y="3.8" width="0.9" height="3.6" fill="#555"/><rect x="157.18" y="3.8" width="0.9" height="3.6" fill="#555"/><rect x="165.93" y="3.8" width="0.9" height="3.6" fill="#555"/><rect x="174.68" y="3.8" width="0.9" height="3.6" fill="#555"/><rect x="183.43" y="3.8" width="0.9" height="3.6" fill="#555"/><rect x="192.18" y="3.8" width="0.9" height="3.6" fill="#555"/><rect x="200.93" y="3.8" width="0.9" height="3.6" fill="#555"/><rect x="209.68" y="3.8" width="0.9" height="3.6" fill="#555"/><rect x="218.43" y="3.8" width="0.9" height="3.6" fill="#555"/><rect x="227.18" y="3.8" width="0.9" height="3.6" fill="#555"/><rect x="235.93" y="3.8" width="0.9" height="3.6" fill="#555"/><rect x="244.68" y="3.8" width="0.9" height="3.6" fill="#555"/><rect x="253.43" y="3.8" width="0.9" height="3.6" fill="#555"/><rect x="262.18" y="3.8" width="0.9" height="3.6" fill="#555"/><rect x="270.93" y="3.8" width="0.9" height="3.6" fill="#555"/><rect x="279.68" y="3.8" width="0.9" height="3.6" fill="#555"/><rect x="288.43" y="3.8" width="0.9" height="3.6" fill="#555"/><rect x="297.18" y="3.8" width="0.9" height="3.6" fill="#555"/><rect x="305.93" y="3.8" width="0.9" height="3.6" fill="#555"/><rect x="314.68" y="3.8" width="0.9" height="3.6" fill="#555"/><rect x="323.43" y="3.8" width="0.9" height="3.6" fill="#555"/><rect x="332.18" y="3.8" width="0.9" height="3.6" fill="#555"/><rect x="340.93" y="3.8" width="0.9" height="3.6" fill="#555"/><rect x="349.68" y="3.8" width="0.9" height="3.6" fill="#555"/><rect x="358.43" y="3.8" width="0.9" height="3.6" fill="#555"/><rect x="367.18" y="3.8" width="0.9" height="3.6" fill="#555"/><rect x="375.93" y="3.8" width="0.9" height="3.6" fill="#555"/><rect x="384.68" y="3.8" width="0.9" height="3.6" fill="#555"/><rect x="393.43" y="3.8" width="0.9" height="3.6" fill="#555"/><rect x="402.18" y="3.8" width="0.9" height="3.6" fill="#555"/><rect x="410.93" y="3.8" width="0.9" height="3.6" fill="#555"/><rect x="419.68" y="3.8" width="0.9" height="3.6" fill="#555"/><rect x="428.43" y="3.8" width="0.9" height="3.6" fill="#555"/><rect x="437.18" y="3.8" width="0.9" height="3.6" fill="#555"/><rect x="445.93" y="3.8" width="0.9" height="3.6" fill="#555"/><rect x="454.68" y="3.8" width="0.9" height="3.6" fill="#555"/><rect x="463.43" y="3.8" width="0.9" height="3.6" fill="#555"/><rect x="472.18" y="3.8" width="0.9" height="3.6" fill="#555"/><rect x="480.93" y="3.8" width="0.9" height="3.6" fill="#555"/><rect x="489.68" y="3.8" width="0.9" height="3.6" fill="#555"/></svg>
<svg class="r" style="left:225px;top:98px;" width="9" height="17" viewBox="0 0 9 17"><path d="M1.2 1h6.6v1.2L4.5 4.8 1.2 2.2z" fill="#fff" stroke="#8a8a8a" stroke-width="0.7"/><path d="M4.5 9.4L7.8 11.6v1.3H1.2v-1.3z" fill="#fff" stroke="#8a8a8a" stroke-width="0.7"/><path d="M1.2 12.9h6.6v3.4H1.2z" fill="#fff" stroke="#8a8a8a" stroke-width="0.7"/></svg>
<svg class="r" style="left:570px;top:105px;" width="9" height="6" viewBox="0 0 9 6"><path d="M0.5 5.5L4.5 1.5l4 4z" fill="#fff" stroke="#888" stroke-width="0.7"/></svg>
<div class="r" style="left:155px;top:114px;width:494px;height:296px;background:#fff;"></div>
<div class="r" style="left:214px;top:172px;width:15px;height:1px;background:#bdbdbd;"></div>
<div class="r" style="left:229px;top:158px;width:1px;height:15px;background:#bdbdbd;"></div>
<div class="r" style="left:575px;top:158px;width:1px;height:15px;background:#bdbdbd;"></div>
<div class="r" style="left:575px;top:172px;width:15px;height:1px;background:#bdbdbd;"></div>
<div class="r" style="left:229px;top:174px;width:1px;height:11px;background:#111;"></div>
<div class="r" style="left:2px;top:114px;width:11px;height:296px;background:#fff;"></div>
<div class="r" style="left:2px;top:114px;width:11px;height:59px;background:#c8c8c8;"></div>
<svg class="r" style="left:2px;top:114px;" width="11" height="296" viewBox="0 0 11 296"><text transform="translate(6 6.78) rotate(90)" x="0" y="1.9" font-size="5.4" text-anchor="middle" font-family="Liberation Sans" fill="#444">4</text><text transform="translate(6 19.71) rotate(90)" x="0" y="1.9" font-size="5.4" text-anchor="middle" font-family="Liberation Sans" fill="#444">3</text><text transform="translate(6 32.64) rotate(90)" x="0" y="1.9" font-size="5.4" text-anchor="middle" font-family="Liberation Sans" fill="#444">2</text><text transform="translate(6 45.57) rotate(90)" x="0" y="1.9" font-size="5.4" text-anchor="middle" font-family="Liberation Sans" fill="#444">1</text><text transform="translate(6 71.43) rotate(90)" x="0" y="1.9" font-size="5.4" text-anchor="middle" font-family="Liberation Sans" fill="#444">1</text><text transform="translate(6 84.36) rotate(90)" x="0" y="1.9" font-size="5.4" text-anchor="middle" font-family="Liberation Sans" fill="#444">2</text><text transform="translate(6 97.29) rotate(90)" x="0" y="1.9" font-size="5.4" text-anchor="middle" font-family="Liberation Sans" fill="#444">3</text><text transform="translate(6 110.22) rotate(90)" x="0" y="1.9" font-size="5.4" text-anchor="middle" font-family="Liberation Sans" fill="#444">4</text><text transform="translate(6 123.15) rotate(90)" x="0" y="1.9" font-size="5.4" text-anchor="middle" font-family="Liberation Sans" fill="#444">5</text><text transform="translate(6 136.08) rotate(90)" x="0" y="1.9" font-size="5.4" text-anchor="middle" font-family="Liberation Sans" fill="#444">6</text><text transform="translate(6 149.01) rotate(90)" x="0" y="1.9" font-size="5.4" text-anchor="middle" font-family="Liberation Sans" fill="#444">7</text><text transform="translate(6 161.94) rotate(90)" x="0" y="1.9" font-size="5.4" text-anchor="middle" font-family="Liberation Sans" fill="#444">8</text><text transform="translate(6 174.87) rotate(90)" x="0" y="1.9" font-size="5.4" text-anchor="middle" font-family="Liberation Sans" fill="#444">9</text><text transform="translate(6 187.80) rotate(90)" x="0" y="1.9" font-size="5.4" text-anchor="middle" font-family="Liberation Sans" fill="#444">10</text><text transform="translate(6 200.73) rotate(90)" x="0" y="1.9" font-size="5.4" text-anchor="middle" font-family="Liberation Sans" fill="#444">11</text><text transform="translate(6 213.66) rotate(90)" x="0" y="1.9" font-size="5.4" text-anchor="middle" font-family="Liberation Sans" fill="#444">12</text><text transform="translate(6 226.59) rotate(90)" x="0" y="1.9" font-size="5.4" text-anchor="middle" font-family="Liberation Sans" fill="#444">13</text><text transform="translate(6 239.52) rotate(90)" x="0" y="1.9" font-size="5.4" text-anchor="middle" font-family="Liberation Sans" fill="#444">14</text><text transform="translate(6 252.45) rotate(90)" x="0" y="1.9" font-size="5.4" text-anchor="middle" font-family="Liberation Sans" fill="#444">15</text><text transform="translate(6 265.38) rotate(90)" x="0" y="1.9" font-size="5.4" text-anchor="middle" font-family="Liberation Sans" fill="#444">16</text><text transform="translate(6 278.31) rotate(90)" x="0" y="1.9" font-size="5.4" text-anchor="middle" font-family="Liberation Sans" fill="#444">17</text><text transform="translate(6 291.24) rotate(90)" x="0" y="1.9" font-size="5.4" text-anchor="middle" font-family="Liberation Sans" fill="#444">18</text><rect x="4" y="12.80" width="3.6" height="0.9" fill="#555"/><rect x="4" y="25.73" width="3.6" height="0.9" fill="#555"/><rect x="4" y="38.65" width="3.6" height="0.9" fill="#555"/><rect x="4" y="51.58" width="3.6" height="0.9" fill="#555"/><rect x="4" y="64.52" width="3.6" height="0.9" fill="#555"/><rect x="4" y="77.45" width="3.6" height="0.9" fill="#555"/><rect x="4" y="90.37" width="3.6" height="0.9" fill="#555"/><rect x="4" y="103.30" width="3.6" height="0.9" fill="#555"/><rect x="4" y="116.23" width="3.6" height="0.9" fill="#555"/><rect x="4" y="129.17" width="3.6" height="0.9" fill="#555"/><rect x="4" y="142.10" width="3.6" height="0.9" fill="#555"/><rect x="4" y="155.03" width="3.6" height="0.9" fill="#555"/><rect x="4" y="167.95" width="3.6" height="0.9" fill="#555"/><rect x="4" y="180.88" width="3.6" height="0.9" fill="#555"/><rect x="4" y="193.81" width="3.6" height="0.9" fill="#555"/><rect x="4" y="206.75" width="3.6" height="0.9" fill="#555"/><rect x="4" y="219.68" width="3.6" height="0.9" fill="#555"/><rect x="4" y="232.61" width="3.6" height="0.9" fill="#555"/><rect x="4" y="245.54" width="3.6" height="0.9" fill="#555"/><rect x="4" y="258.46" width="3.6" height="0.9" fill="#555"/><rect x="4" y="271.40" width="3.6" height="0.9" fill="#555"/><rect x="4" y="284.32" width="3.6" height="0.9" fill="#555"/></svg>
<div class="r" style="left:788px;top:98px;width:10px;height:312px;background:#dcdcdc;"></div>
<div class="r" style="left:789px;top:99px;width:9px;height:10px;background:#fff;"></div>
<svg class="r" style="left:790px;top:101px;" width="7" height="5" viewBox="0 0 7 5"><path d="M0.5 4L3.5 1 6.5 4z" fill="#555"/></svg>
<div class="r" style="left:789px;top:115px;width:9px;height:118px;background:#fff;"></div>
<div class="r" style="left:789px;top:400px;width:9px;height:10px;background:#fff;"></div>
<svg class="r" style="left:790px;top:403px;" width="7" height="5" viewBox="0 0 7 5"><path d="M0.5 1L3.5 4 6.5 1z" fill="#555"/></svg>
<div class="r" style="left:792px;top:329px;width:7px;height:31px;background:#fff;box-sizing:border-box;border:1.3px solid #5f5f5f;border-right:none;border-radius:3px 0 0 3px"></div>
<div class="r" style="left:794.5px;top:343px;width:3px;height:15px;background:#f08a24;"></div>
<div class="r" style="left:0px;top:410px;width:798px;height:14px;background:#f3f3f3;"></div>
<div class="r" style="left:0px;top:410px;width:798px;height:1px;background:#e3e3e3;"></div>
<div class="t" style="left:5px;top:414.2px;font-size:8px;line-height:8px;color:#444;transform:scaleX(0.94);transform-origin:0 0;">第 1 页，共 1 页</div>
<div class="t" style="left:70.5px;top:414.2px;font-size:8px;line-height:8px;color:#444;transform:scaleX(0.94);transform-origin:0 0;"><span style="font-size:8.8px">424</span> 个字</div>
<svg class="r" style="left:113px;top:413px;" width="10" height="8" viewBox="0 0 10 8"><rect x="0.5" y="0.5" width="6" height="7" fill="none" stroke="#777" stroke-width="0.8"/><path d="M6 4h3M8 3l1 1 -1 1" fill="none" stroke="#777" stroke-width="0.8"/></svg>
<div class="t" style="left:131.5px;top:414.2px;font-size:8px;line-height:8px;color:#444;transform:scaleX(0.94);transform-origin:0 0;">中文(中国)</div>
<svg class="r" style="left:625px;top:412px;" width="10" height="10" viewBox="0 0 10 10"><path d="M0.5 1.5h4l0.5 0.5 0.5 -0.5h4v7.5h-4l-0.5 0.5 -0.5 -0.5h-4z" fill="#e8e8e8" stroke="#999" stroke-width="0.8"/><path d="M5 2v7" stroke="#999" stroke-width="0.7"/></svg>
<div class="r" style="left:642px;top:410px;width:23px;height:14px;background:#c8c8c8;"></div>
<div class="r" style="left:649px;top:412.5px;width:9px;height:8px;background:#bcbcbc;box-sizing:border-box;border:1px solid #aaa"></div>
<svg class="r" style="left:673px;top:412px;" width="11" height="11" viewBox="0 0 11 11"><rect x="0.5" y="0.5" width="6.5" height="8" fill="none" stroke="#999" stroke-width="0.8"/><circle cx="7.5" cy="7.8" r="2.4" fill="#fff" stroke="#666" stroke-width="0.8"/><path d="M5.5 7.8h4M7.5 5.6v4.4" stroke="#777" stroke-width="0.5"/></svg>
<div class="r" style="left:691px;top:416.5px;width:4px;height:1px;background:#555;"></div>
<div class="r" style="left:698px;top:416.5px;width:62px;height:0.7px;background:#999;"></div>
<div class="r" style="left:729px;top:413px;width:3px;height:7px;background:#666;"></div>
<svg class="r" style="left:763px;top:413px;" width="7" height="7" viewBox="0 0 7 7"><path d="M3.5 0.5v6M0.5 3.5h6" stroke="#555" stroke-width="1"/></svg>
<div class="t" style="left:772px;top:413.4px;font-size:8.4px;line-height:8.4px;color:#444;-webkit-text-stroke-width:0.1px">100%</div>
<div class="r" style="left:0px;top:424px;width:798px;height:5px;background:#3a3a3a;"></div>
<div class="r" style="left:30px;top:424px;width:214px;height:5px;background:#ececec;"></div>
<div class="r" style="left:466px;top:424px;width:27px;height:5px;background:#6d6d6d;"></div>
<div class="t" style="left:733px;top:425px;font-size:6px;line-height:6px;color:#ddd;">17:55</div>
<div class="t" style="left:230px;top:176.8px;font-size:9px;line-height:9px;color:#141414;letter-spacing:-0.34px;-webkit-text-stroke-width:0.12px">考研疑问：<span class="ret">↵</span></div>
<div class="t" style="left:229.5px;top:189.73px;font-size:9px;line-height:9px;color:#141414;font-family:"Liberation Serif",serif;letter-spacing:-0.6px">1.</div>
<div class="t" style="left:245px;top:189.73px;font-size:9px;line-height:9px;color:#141414;letter-spacing:-0.34px;-webkit-text-stroke-width:0.12px">考研有哪些加分项？<span class="ret">↵</span></div>
<div class="t j dt" style="left:245px;top:202.66px;width:330px;font-size:9px;line-height:9px;color:#141414;letter-spacing:-0.34px">加分项比较多；有学校认可的比赛名次，如数学建模、挑战杯等赛事、参加大<span class="sqb">创项目</span>等</div>
<div class="t" style="left:245px;top:215.59px;font-size:9px;line-height:9px;color:#141414;letter-spacing:-0.34px;-webkit-text-stroke-width:0.12px">等，具体的加分项以及具体分数参考官方文件。<span class="ret">↵</span></div>
<div class="t" style="left:229.5px;top:228.52px;font-size:9px;line-height:9px;color:#141414;font-family:"Liberation Serif",serif;letter-spacing:-0.6px">2.</div>
<div class="t" style="left:245px;top:228.52px;font-size:9px;line-height:9px;color:#141414;letter-spacing:-0.34px;-webkit-text-stroke-width:0.12px">考研加分项的力度如何？<span class="ret">↵</span></div>
<div class="t j dt" style="left:245px;top:241.45px;width:330px;font-size:9px;line-height:9px;color:#141414;letter-spacing:-0.34px">如果你的纯学业成绩不能保证达到（并且稳定在）专业前<span class="lt"> 6%</span>（因为专业学业成绩前<span class="lt"> 6%</span></div>
<div class="t j dt" style="left:245px;top:254.38px;width:330px;font-size:9px;line-height:9px;color:#141414;letter-spacing:-0.49px">的同学有直接保<span class="sq">研</span>资格<span class="cpa">）</span><span class="cpb">，</span>那么考研加分项的力度是非常大的，所以，希望保<span class="sq">研</span>的同学一</div>
<div class="t" style="left:245px;top:267.31px;font-size:9px;line-height:9px;color:#141414;letter-spacing:-0.34px;-webkit-text-stroke-width:0.12px">定要注意这一块的准备。<span class="ret">↵</span></div>
<div class="t" style="left:229.5px;top:280.24px;font-size:9px;line-height:9px;color:#141414;font-family:"Liberation Serif",serif;letter-spacing:-0.6px">3.</div>
<div class="t" style="left:245px;top:280.24px;font-size:9px;line-height:9px;color:#141414;letter-spacing:-0.34px;-webkit-text-stroke-width:0.12px">为了准备保<span class="sq">研</span>，应该准备那些比赛？<span class="ret">↵</span></div>
<div class="t j dt" style="left:245px;top:293.17px;width:330px;font-size:9px;line-height:9px;color:#141414;letter-spacing:-0.34px">这一块具体参考学校官方文件。对于数学学院的同学来说，数学建模、大<span class="sqb">创项目</span>是参加</div>
<div class="t j dt" style="left:245px;top:306.10px;width:330px;font-size:9px;line-height:9px;color:#141414;letter-spacing:-0.34px">人数比较多的，也比较推荐希望保<span class="sq">研</span>的同学参加这两个项目；至于其他比赛，同学们可</div>
<div class="t j dt" style="left:245px;top:319.03px;width:330px;font-size:9px;line-height:9px;color:#141414;letter-spacing:-0.34px">以根据自己的特长以及同届同学的动态，酌情考虑<span class="cp2">。</span>(由于比赛大多都是组队参与，组内</div>
<div class="t" style="left:245px;top:331.96px;font-size:9px;line-height:9px;color:#141414;letter-spacing:-0.34px;-webkit-text-stroke-width:0.12px">名次会影响加分多少）<span class="ret">↵</span></div>
<div class="t" style="left:229.5px;top:344.89px;font-size:9px;line-height:9px;color:#141414;font-family:"Liberation Serif",serif;letter-spacing:-0.6px">4.</div>
<div class="t" style="left:245px;top:344.89px;font-size:9px;line-height:9px;color:#141414;letter-spacing:-0.34px;-webkit-text-stroke-width:0.12px">保<span class="sq">研</span>心态、压力以及竞争力<span class="ret">↵</span></div>
<div class="t j dt" style="left:245px;top:357.82px;width:330px;font-size:9px;line-height:9px;color:#141414;letter-spacing:-0.34px">对于希望保研的同学，一定要稳住自己的心态，要拿出十足的冲劲去对待日常的学习，</div>
<div class="t j dt" style="left:245px;top:370.75px;width:330px;font-size:9px;line-height:9px;color:#141414;letter-spacing:-0.49px">但是也要有保不上研，就去考研的勇气（如果希望读研的话<span class="cpa">）</span><span class="cpb">，</span>保研的压力和竞争力肯定</div>
<div class="t" style="left:245px;top:383.68px;font-size:9px;line-height:9px;color:#141414;letter-spacing:-0.34px;-webkit-text-stroke-width:0.12px">是越往后越大的，希望大家能够稳住心态。<span class="ret">↵</span></div>
<div class="t" style="left:245px;top:396.61px;font-size:9px;line-height:9px;color:#141414;letter-spacing:-0.34px;-webkit-text-stroke-width:0.12px"><span class="ret">↵</span></div>
</body></html>
